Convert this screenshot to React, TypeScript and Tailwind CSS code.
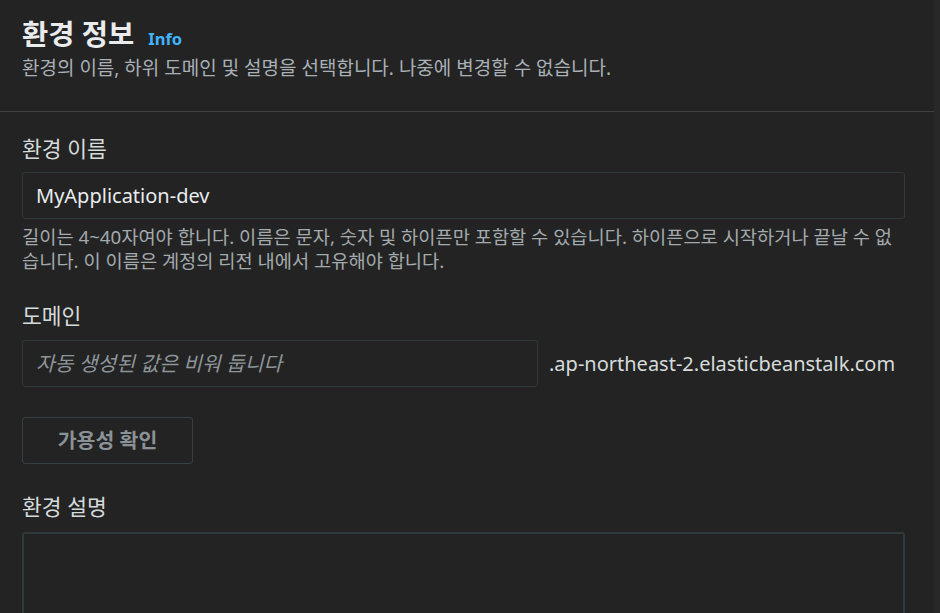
import React from "react";

const font = {
  fontFamily: '"Noto Sans", "Noto Sans CJK KR", sans-serif',
};

const App = () => {
  return (
    <div className="flex h-[613px] w-full bg-[#232323] overflow-hidden" style={font}>
      <div className="flex-1">
        {/* Header */}
        <header className="px-[22px] pt-[16px] pb-[31px] border-b border-[#414141]">
          <div className="flex items-baseline gap-[14px]">
            <h1 className="text-[28.5px] leading-[36px] font-bold text-[#e9ebed]">환경 정보</h1>
            <a className="text-[16.5px] font-bold text-[#42b4ff]">Info</a>
          </div>
          <p className="mt-[4px] text-[19px] leading-[24px] text-[#a9b0b6]">
            환경의 이름, 하위 도메인 및 설명을 선택합니다. 나중에 변경할 수 없습니다.
          </p>
        </header>

        {/* Form */}
        <div className="pl-[22px] pr-[29px] pt-[21px]">
          {/* Environment name */}
          <div>
            <label className="block text-[21.5px] leading-[32px] text-[#d5dbdb]">환경 이름</label>
            <div className="mt-[7px] h-[47px] flex items-center px-[13px] border border-[#2f3a3d] rounded-[3px] text-[20px] text-[#e9ebed]">
              MyApplication-dev
            </div>
            <p className="mt-[6px] text-[18.7px] leading-[24px] text-[#a3aaae] break-all">
              길이는 4~40자여야 합니다. 이름은 문자, 숫자 및 하이픈만 포함할 수 있습니다. 하이픈으로 시작하거나 끝날 수 없습니다. 이 이름은 계정의 리전 내에서 고유해야 합니다.
            </p>
          </div>

          {/* Domain */}
          <div className="mt-[27px]">
            <label className="block text-[21.5px] leading-[32px] text-[#d5dbdb]">도메인</label>
            <div className="mt-[8px] flex items-center">
              <div className="w-[516px] h-[47px] flex items-center px-[13px] border border-[#2f3a3d] rounded-[3px] text-[20.4px] italic text-[#8d9599]">
                자동 생성된 값은 비워 둡니다
              </div>
              <span className="ml-[11px] text-[20px] text-[#d5dbdb]">.ap-northeast-2.elasticbeanstalk.com</span>
            </div>
            <button className="mt-[30px] w-[171px] h-[47px] border border-[#383f42] rounded-[3px] text-[20.5px] font-semibold text-[#8b9296]">
              가용성 확인
            </button>
          </div>

          {/* Description */}
          <div className="mt-[27px]">
            <label className="block text-[21.5px] leading-[32px] text-[#d5dbdb]">환경 설명</label>
            <div className="mt-[9px] h-[120px] border-2 border-[#2f3a3d] rounded-[3px]" />
          </div>
        </div>
      </div>
      <div className="w-[6px] bg-[#282828]" />
    </div>
  );
};

export default App;
